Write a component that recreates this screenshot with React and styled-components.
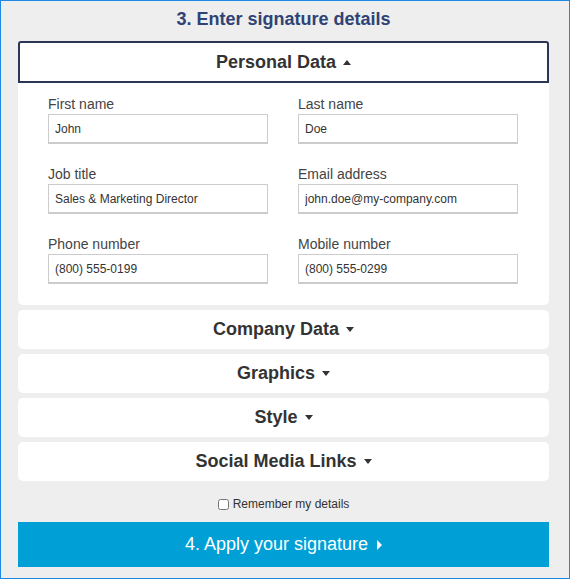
import React, { useState } from 'react';
import styled, { createGlobalStyle } from 'styled-components';

const GlobalStyle = createGlobalStyle`
	html, body {
		margin: 0;
		padding: 0;
		background: #eeeeee;
		font-family: 'Liberation Sans', Arial, sans-serif;
	}
	* {
		box-sizing: border-box;
	}
`;

//Outer frame of the step
const Frame = styled.div`
	width: 570px;
	height: 579px;
	border: 1px solid #1e88e5;
	background: #eeeeee;
	padding: 0 20px 0 17px;
	display: flex;
	flex-direction: column;
`;

const StepTitle = styled.h2`
	margin: 0;
	height: 40px;
	display: flex;
	align-items: center;
	justify-content: center;
	font-size: 18px;
	font-weight: bold;
	color: #2e4374;
	padding-bottom: 3px;
`;

const Caret = styled.span`
	display: inline-block;
	width: 0;
	height: 0;
	margin-left: 7px;
	border-left: 4px solid transparent;
	border-right: 4px solid transparent;
	${({ $up }) => ($up ? 'border-bottom: 5px solid #333;' : 'border-top: 5px solid #333;')}
`;

const RightCaret = styled.span`
	display: inline-block;
	width: 0;
	height: 0;
	margin-left: 9px;
	border-top: 5px solid transparent;
	border-bottom: 5px solid transparent;
	border-left: 5px solid #fff;
`;

const Section = styled.div`
	background: #fff;
	border-radius: 5px;
	margin-bottom: 5px;
`;

const SectionHeader = styled.div`
	display: flex;
	align-items: center;
	justify-content: center;
	height: ${({ $open }) => ($open ? '42px' : '39px')};
	font-size: 18px;
	font-weight: bold;
	color: #333;
	cursor: pointer;
	border: ${({ $open }) => ($open ? '2px solid #2b3556' : 'none')};
	border-radius: ${({ $open }) => ($open ? '3px 3px 0 0' : '5px')};
`;

const SectionBody = styled.div`
	display: grid;
	grid-template-columns: 220px 220px;
	column-gap: 30px;
	row-gap: 22px;
	padding: 13px 30px 21px;
`;

const Field = styled.label`
	display: flex;
	flex-direction: column;
	gap: 2px;
`;

const FieldLabel = styled.span`
	font-size: 14px;
	line-height: 16px;
	color: #444;
`;

const TextInput = styled.input`
	height: 30px;
	width: 100%;
	border: 1px solid #ccc;
	border-bottom-width: 2px;
	padding: 0 6px;
	font-family: 'Liberation Sans', Arial, sans-serif;
	font-size: 12px;
	color: #333;
	background: #fff;
	outline: none;
`;

const RememberRow = styled.label`
	display: flex;
	align-items: center;
	justify-content: center;
	gap: 4px;
	height: 36px;
	font-size: 12px;
	color: #333;

	input {
		margin: 0;
		width: 11px;
		height: 11px;
	}
`;

const ApplyButton = styled.button`
	height: 45px;
	width: 100%;
	border: none;
	background: #009fd6;
	color: #fff;
	font-family: 'Liberation Sans', Arial, sans-serif;
	font-size: 18px;
	display: flex;
	align-items: center;
	justify-content: center;
	cursor: pointer;
`;

const personalFields = [
	{ label: 'First name', value: 'John' },
	{ label: 'Last name', value: 'Doe' },
	{ label: 'Job title', value: 'Sales & Marketing Director' },
	{ label: 'Email address', value: 'john.doe@my-company.com' },
	{ label: 'Phone number', value: '(800) 555-0199' },
	{ label: 'Mobile number', value: '(800) 555-0299' },
];

const otherSections = ['Company Data', 'Graphics', 'Style', 'Social Media Links'];

export default function App() {
	const [remember, setRemember] = useState(false);

	return (
		<>
			<GlobalStyle />
			<Frame>
				<StepTitle>3. Enter signature details</StepTitle>
				<Section>
					<SectionHeader $open>
						Personal Data
						<Caret $up />
					</SectionHeader>
					<SectionBody>
						{personalFields.map((f) => (
							<Field key={f.label}>
								<FieldLabel>{f.label}</FieldLabel>
								<TextInput defaultValue={f.value} />
							</Field>
						))}
					</SectionBody>
				</Section>
				{otherSections.map((name) => (
					<Section key={name}>
						<SectionHeader>
							{name}
							<Caret />
						</SectionHeader>
					</Section>
				))}
				<RememberRow>
					<input type="checkbox" checked={remember} onChange={() => setRemember(!remember)} />
					Remember my details
				</RememberRow>
				<ApplyButton>
					4. Apply your signature
					<RightCaret />
				</ApplyButton>
			</Frame>
		</>
	);
}
